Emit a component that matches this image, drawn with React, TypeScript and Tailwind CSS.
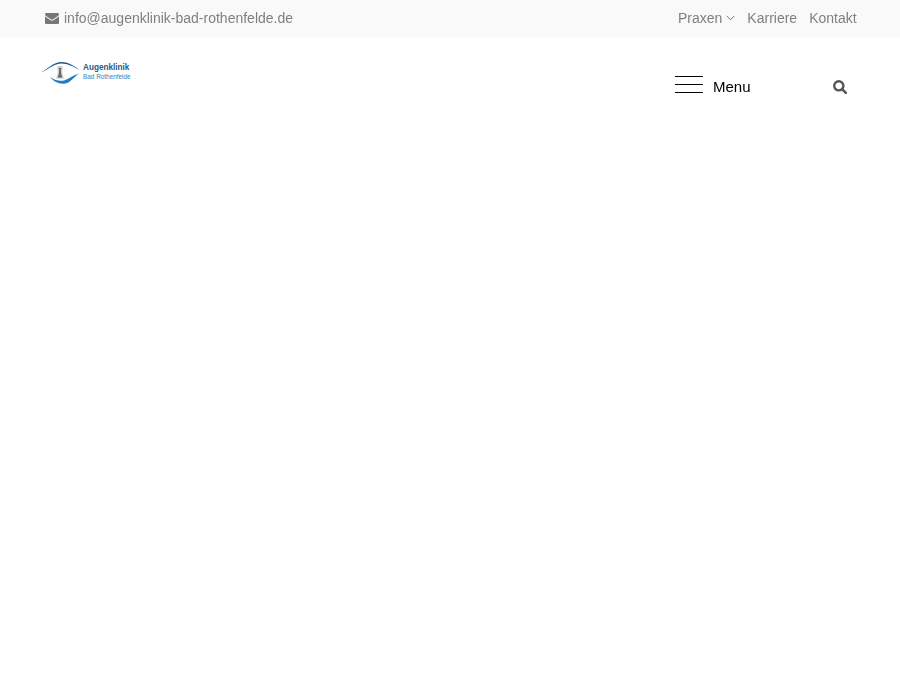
const Logo = () => (
  <div className="flex items-center">
    <svg width="43" height="26" viewBox="0 0 43 26" fill="none">
      {/* upper lid */}
      <path d="M0.5 12.5 C 7 10 12 3 20 2 C 27 1.5 33 5 39.5 10 C 33 6.5 27 3.5 21 3.6 C 13 4 8 10.5 0.5 12.5 Z" fill="#1d5a92" />
      {/* lower lid */}
      <path d="M10 17 C 14 20 19 21.5 24 20.5 C 29 19 33 15 39.5 13.5 C 34.5 16 31 22.5 25 23.6 C 19 24.6 13 21 10 17 Z" fill="#1e7fc0" />
      {/* tower */}
      <path d="M16 18.5 L17.6 14 L18 10 L17 9 L17.8 6 L22.2 6 L23 9 L22 10 L22.4 14 L24 18.5 Z" fill="#c9cbcd" />
      <path d="M17.8 17.5 L19 13.5 L19.2 9.5 L18.8 8 H21.2 L20.8 9.5 L21 13.5 L22.2 17.5 Z" fill="#62676b" />
    </svg>
    <div className="-mt-0.5 flex flex-col">
      <span className="text-[8.2px] leading-[10px] font-bold text-[#1d5a92]">Augenklinik</span>
      <span className="text-[6.4px] leading-[8px] text-[#3a7fb5]">Bad Rothenfelde</span>
    </div>
  </div>
)

const Envelope = () => (
  <svg className="mt-px" width="14" height="11" viewBox="0 0 14 11" fill="#777">
    <path d="M0 1.3 C0 .5 .6 0 1.3 0 H12.7 C13.4 0 14 .5 14 1.3 C14 2 13.6 2.6 13 3 L7.8 6.5 C7.3 6.9 6.7 6.9 6.2 6.5 L1 3 C.4 2.6 0 2 0 1.3 Z" />
    <path d="M0 3.4 L5.6 7.2 C6.4 7.8 7.6 7.8 8.4 7.2 L14 3.4 V9.7 C14 10.4 13.4 11 12.7 11 H1.3 C.6 11 0 10.4 0 9.7 Z" />
  </svg>
)

const Search = () => (
  <svg width="14" height="14" viewBox="0 0 14 14" fill="none" stroke="#555">
    <circle cx="5.8" cy="5.8" r="4.6" strokeWidth="2.4" />
    <path d="M9.2 9.2 L12.8 12.8" strokeWidth="2.6" strokeLinecap="round" />
  </svg>
)

const Chevron = () => (
  <svg width="9" height="6" viewBox="0 0 9 6" fill="none" stroke="#777">
    <path d="M.8 1 L4.5 4.7 L8.2 1" strokeWidth="1" />
  </svg>
)

export default function App() {
  const links = ["Karriere", "Kontakt"]

  return (
    <div className="min-h-[700px] bg-white font-['Liberation_Sans',Arial,sans-serif]">
      {/* Top bar */}
      <div className="flex h-[37px] items-center justify-between bg-[#f9f9f9] pb-0.5 pl-[45px] pr-[43px] text-sm text-[#808080]">
        <a href="#" className="flex items-center gap-[5px]">
          <Envelope />
          <span className="will-change-transform">info@augenklinik-bad-rothenfelde.de</span>
        </a>
        <div className="flex items-center gap-3 will-change-transform">
          <a href="#" className="flex items-center gap-1">
            Praxen
            <Chevron />
          </a>
          {links.map((link) => (
            <a key={link} href="#">
              {link}
            </a>
          ))}
        </div>
      </div>

      {/* Main header */}
      <div className="flex items-start justify-between pl-10 pr-[53px]">
        <a href="#" className="mt-[23px]">
          <Logo />
        </a>
        <div className="mt-[39px] flex items-center">
          <button className="flex items-center gap-[10px] text-[15px] text-black will-change-transform">
            <span className="mb-[5px] flex h-[17px] w-7 flex-col justify-between">
              <span className="h-px bg-black" />
              <span className="h-px bg-black" />
              <span className="h-px bg-black" />
            </span>
            Menu
          </button>
          <span className="ml-[82px]">
            <Search />
          </span>
        </div>
      </div>
    </div>
  )
}
